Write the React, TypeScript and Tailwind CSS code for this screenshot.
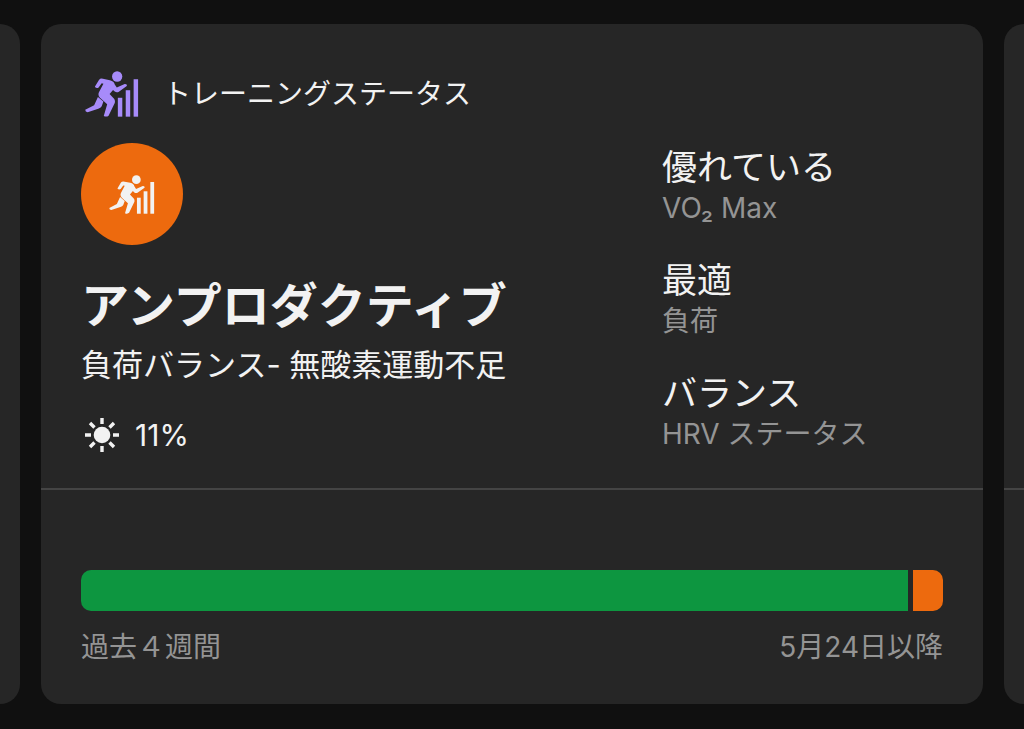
type IconProps = {
  className?: string
}

function TrainingIcon({ className }: IconProps) {
  return (
    <svg viewBox="50 48 156 134" fill="currentColor" className={className} aria-hidden="true">
      {/* runner */}
      <circle cx="143" cy="64" r="15" />
      <path d="M98 70 L122 75 Q134 78 136 87 L142 96 L165 86 Q173 86 171 92 L147 109 Q141 111 136 108 L131 103 L121 115 L134 129 Q138 134 136 141 L118 178 Q112 183 104 179 L114 145 L93 126 Q86 119 90 110 L103 85 L98 84 L89 96 Q83 100 78 94 L90 74 Q93 70 98 70 Z" />
      <path d="M87 124 L103 137 L98 151 Q95 156 88 158 L57 168 Q50 168 50 161 L76 148 Z" />
      {/* bars */}
      <rect x="145" y="126" width="13" height="55" />
      <rect x="168" y="104" width="13" height="77" />
      <rect x="191" y="72" width="13" height="109" />
    </svg>
  )
}

function SunIcon({ className }: IconProps) {
  return (
    <svg viewBox="0 0 34 34" className={className} aria-hidden="true">
      <circle cx="17" cy="17" r="8.3" fill="currentColor" />
      <path
        d="M17 0v6M17 28v6M0 17h6M28 17h6M5 5l4.5 4.5M24.5 24.5l4.5 4.5M5 29l4.5-4.5M24.5 9.5l4.5-4.5"
        stroke="currentColor"
        strokeWidth="3.4"
        fill="none"
      />
    </svg>
  )
}

const metrics = [
  { value: "優れている", label: "VO₂ Max" },
  { value: "最適", label: "負荷" },
  { value: "バランス", label: "HRV ステータス" },
]

export default function App() {
  return (
    <div className="flex min-h-screen gap-[21px] overflow-hidden bg-[#101010] pt-6 pb-[25px] font-['Inter','Noto_Sans_CJK_JP',sans-serif] text-[#f2f2f2]">
      {/* previous card */}
      <div className="w-5 shrink-0 rounded-r-[20px] bg-[#262626]" />

      <main className="flex min-w-0 flex-1 flex-col rounded-[20px] bg-[#262626]">
        <section className="px-10 pb-8">
          <header className="flex items-center gap-6 pt-[47px]">
            <TrainingIcon className="ml-1 h-[46px] w-[54px] text-[#a78bfa]" />
            <h1 className="text-[28px] leading-10">トレーニングステータス</h1>
          </header>

          <div className="flex justify-between">
            <div>
              <div className="mt-[26px] flex size-[102px] items-center justify-center rounded-full bg-[#ed6a0e]">
                <TrainingIcon className="h-[39px] w-[46px]" />
              </div>
              <h2 className="mt-7 text-5xl leading-[66px] font-bold">アンプロダクティブ</h2>
              <p className="mt-1 text-[31px] leading-[44px]">負荷バランス- 無酸素運動不足</p>
              <div className="mt-7 flex items-center gap-4">
                <SunIcon className="ml-1 size-[34px]" />
                <span className="text-3xl leading-10">11%</span>
              </div>
            </div>

            <dl className="mt-7 flex w-[281px] flex-col gap-7">
              {metrics.map((metric) => (
                <div key={metric.label} className="flex flex-col-reverse">
                  <dt className="pb-1 text-[28px] leading-9 text-[#949494]">{metric.label}</dt>
                  <dd className="text-[35px] leading-[45px]">{metric.value}</dd>
                </div>
              ))}
            </dl>
          </div>
        </section>

        <section className="flex-1 border-t-2 border-[#444444] px-10 pt-20">
          <div className="flex h-[41px] gap-[5px] overflow-hidden rounded-[10px]">
            <div className="flex-1 bg-[#0d9640]" />
            <div className="w-[30px] bg-[#ed6a0e]" />
          </div>
          <div className="mt-4 flex justify-between text-[28px] leading-10 text-[#949494]">
            <span>過去４週間</span>
            <span>5月24日以降</span>
          </div>
        </section>
      </main>

      {/* next card */}
      <div className="w-5 shrink-0 rounded-l-[20px] bg-[#262626]">
        <div className="h-[466px] border-b-2 border-[#444444]" />
      </div>
    </div>
  )
}
